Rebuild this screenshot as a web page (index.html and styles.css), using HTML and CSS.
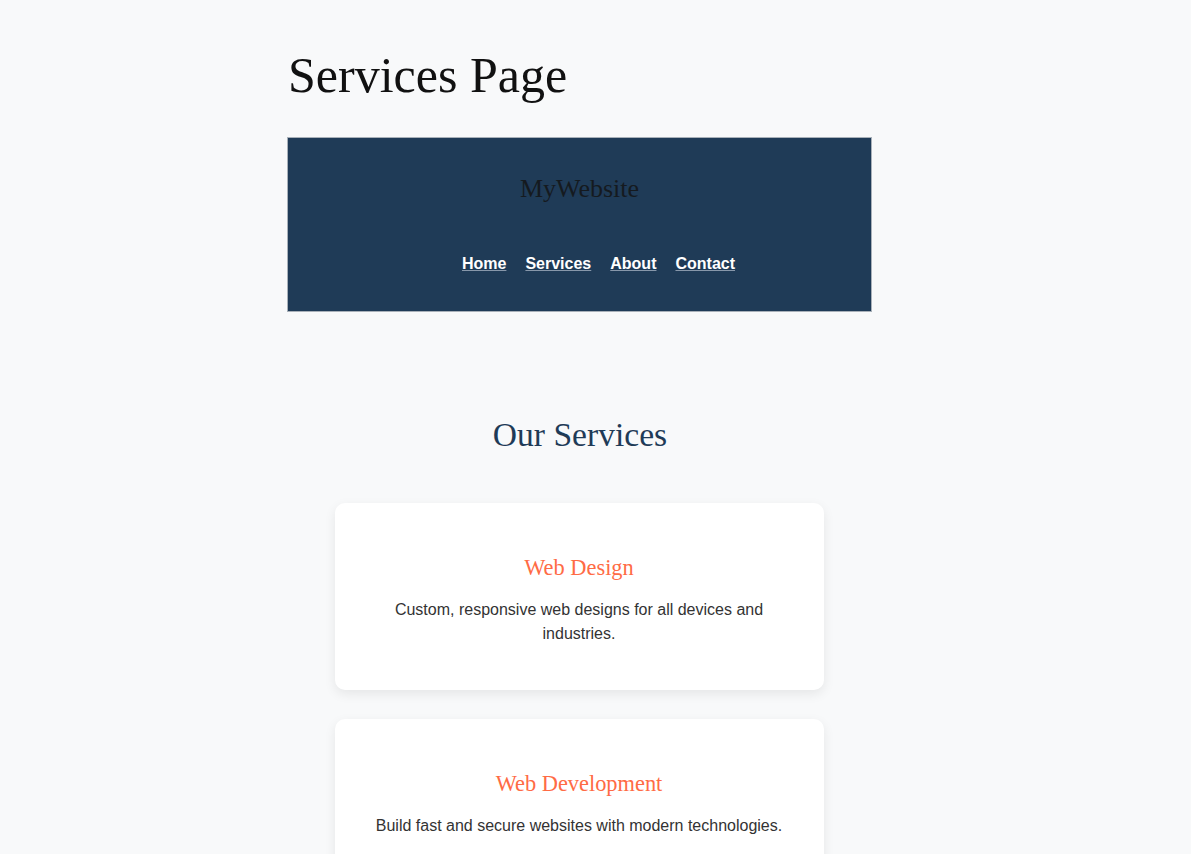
FILE: index.html
```html
<!DOCTYPE html>
<html lang="en">
<head>
<meta charset="utf-8">
<title>Services Page</title>
<link rel="stylesheet" href="styles.css">
</head>
<body>
<div class="page">
  <h1 class="page-title">Services Page</h1>
  <header class="site-header">
    <div class="logo">MyWebsite</div>
    <nav class="nav">
      <a href="#">Home</a>
      <a href="#">Services</a>
      <a href="#">About</a>
      <a href="#">Contact</a>
    </nav>
  </header>
  <section class="services">
    <h2 class="services-title">Our Services</h2>
    <div class="card">
      <h3 class="card-title">Web Design</h3>
      <p class="card-text">Custom, responsive web designs for all devices and industries.</p>
    </div>
    <div class="card">
      <h3 class="card-title">Web Development</h3>
      <p class="card-text">Build fast and secure websites with modern technologies.</p>
    </div>
  </section>
</div>
</body>
</html>
```

FILE: styles.css
```css
html, body {
  margin: 0;
  padding: 0;
  background: #f8f9fa;
}

body {
  font-family: "Liberation Serif", "Times New Roman", serif;
}

.page {
  width: 584px;
  margin-left: 288px;
}

.page-title {
  font-family: "Liberation Serif", serif;
  font-weight: normal;
  font-size: 50px;
  line-height: 57px;
  color: #111;
  margin: 47px 0 33px;
}

.site-header {
  background: #1f3b57;
  border: 1px solid #a9b1b9;
  margin-left: -1px;
  padding: 36px 0 38px;
  text-align: center;
}

.logo {
  font-family: "Liberation Serif", serif;
  font-size: 26px;
  line-height: 29px;
  color: #151a1f;
}

.nav {
  display: flex;
  justify-content: center;
  gap: 19px;
  margin-top: 52px;
  padding-left: 38px;
  line-height: 18px;
}

.nav a {
  font-family: "Liberation Sans", Arial, sans-serif;
  font-weight: bold;
  font-size: 16px;
  color: #fff;
  text-decoration: underline;
  text-decoration-color: #8797aa;
}

.services {
  padding-top: 104px;
}

.services-title {
  font-family: "Liberation Serif", serif;
  font-weight: normal;
  font-size: 33.6px;
  line-height: 37px;
  color: #1f3b57;
  text-align: center;
  margin: 0 0 50px;
}

.card {
  width: 489px;
  box-sizing: border-box;
  margin: 0 auto 29px;
  background: #fff;
  border-radius: 10px;
  box-shadow: 0 4px 12px rgba(0, 0, 0, 0.08);
  padding: 30px 40px 30px;
  text-align: center;
  position: relative;
  left: -1px;
}

.card-title {
  font-family: "Liberation Serif", serif;
  font-weight: normal;
  font-size: 22.4px;
  line-height: 25px;
  color: #ff6b45;
  margin: 22px 0 18px;
}

.card-text {
  font-family: "Liberation Sans", Arial, sans-serif;
  font-size: 16px;
  line-height: 24px;
  color: #333;
  margin: 0 0 14px;
}
```
